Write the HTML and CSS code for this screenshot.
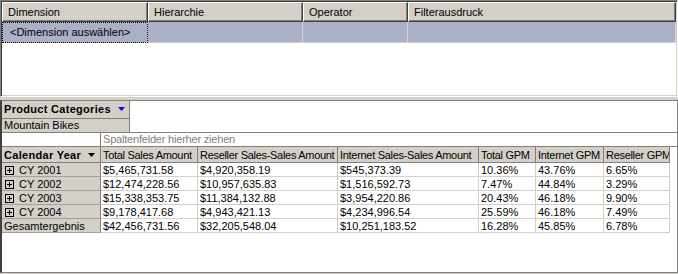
FILE: index.html
```html
<!DOCTYPE html>
<html lang="de">

<head>
    <meta charset="UTF-8">
    <title>Cube Browser</title>
    <link rel="stylesheet" href="styles.css">
</head>

<body>
    <!-- Filter grid -->
    <div class="filter-grid">
        <table class="grid">
            <tr>
                <th class="c-dim">Dimension</th>
                <th class="c-hier">Hierarchie</th>
                <th class="c-op">Operator</th>
                <th class="c-expr">Filterausdruck</th>
            </tr>
            <tr class="sel-row">
                <td class="focus">&lt;Dimension auswählen&gt;</td>
                <td></td>
                <td></td>
                <td></td>
            </tr>
        </table>
    </div>

    <!-- Pivot table -->
    <div class="pivot">
        <div class="filter-area">
            <div class="field">
                <div class="field-btn">Product Categories
                    <svg class="arrow" width="7" height="4" viewBox="0 0 7 4"><path d="M0 0H7L3.5 4Z" fill="#0000ff"/></svg>
                </div>
                <div class="field-value">Mountain Bikes</div>
            </div>
        </div>
        <div class="column-drop">
            <div class="drop-spacer"></div>
            <div class="drop-hint">Spaltenfelder hierher ziehen</div>
        </div>
        <table class="pv">
            <tr>
                <th class="w1 row-field">Calendar Year
                    <svg class="arrow" width="7" height="4" viewBox="0 0 7 4"><path d="M0 0H7L3.5 4Z" fill="#000"/></svg>
                </th>
                <th class="w2">Total Sales Amount</th>
                <th class="w3">Reseller Sales-Sales Amount</th>
                <th class="w4">Internet Sales-Sales Amount</th>
                <th class="w5">Total GPM</th>
                <th class="w6">Internet GPM</th>
                <th class="w7">Reseller GPM</th>
            </tr>
            <tr>
                <th class="rh"><span class="plus"></span>CY 2001</th>
                <td>$5,465,731.58</td><td>$4,920,358.19</td><td>$545,373.39</td><td>10.36%</td><td>43.76%</td><td>6.65%</td>
            </tr>
            <tr>
                <th class="rh"><span class="plus"></span>CY 2002</th>
                <td>$12,474,228.56</td><td>$10,957,635.83</td><td>$1,516,592.73</td><td>7.47%</td><td>44.84%</td><td>3.29%</td>
            </tr>
            <tr>
                <th class="rh"><span class="plus"></span>CY 2003</th>
                <td>$15,338,353.75</td><td>$11,384,132.88</td><td>$3,954,220.86</td><td>20.43%</td><td>46.18%</td><td>9.90%</td>
            </tr>
            <tr>
                <th class="rh"><span class="plus"></span>CY 2004</th>
                <td>$9,178,417.68</td><td>$4,943,421.13</td><td>$4,234,996.54</td><td>25.59%</td><td>46.18%</td><td>7.49%</td>
            </tr>
            <tr>
                <th class="rh">Gesamtergebnis</th>
                <td>$42,456,731.56</td><td>$32,205,548.04</td><td>$10,251,183.52</td><td>16.28%</td><td>45.85%</td><td>6.78%</td>
            </tr>
        </table>
    </div>
</body>

</html>
```

FILE: styles.css
```css
body {
    margin: 0;
    width: 678px;
    height: 274px;
    overflow: hidden;
    background-color: #d4d0c8;
    font-family: "Liberation Sans", Arial, sans-serif;
    font-size: 11px;
    color: #000;
}

/* Filter grid at the top */
.filter-grid {
    height: 97px;
    box-sizing: border-box;
    border-top: 1px solid #808080;
    border-left: 1px solid #808080;
    border-right: 1px solid #fff;
    border-bottom: 1px solid #fff;
    box-shadow: inset 1px 1px 0 #404040, inset -1px -1px 0 #d4d0c8;
    background-color: #fff;
    padding: 1px;
    margin-bottom: 3px;
}

.grid {
    table-layout: fixed;
    width: 674px;
    border-spacing: 0;
}

.grid th {
    box-sizing: border-box;
    height: 20px;
    padding: 0 5px;
    text-align: left;
    font-weight: normal;
    background-color: #d4d0c8;
    border-top: 1px solid #fff;
    border-left: 1px solid #fff;
    border-right: 1px solid #404040;
    border-bottom: 1px solid #404040;
    box-shadow: inset -1px -1px 0 #808080;
    white-space: nowrap;
}

.c-dim { width: 146px; }
.c-hier { width: 155px; }
.c-op { width: 105px; }
.c-expr { width: 268px; }

.sel-row td {
    box-sizing: border-box;
    height: 21px;
    padding: 0 8px;
    background-color: #a9b1c9;
    border-right: 1px solid #d4d0c8;
    border-bottom: 1px solid #d4d0c8;
    white-space: nowrap;
}

.sel-row td.focus {
    outline: 1px dotted #000;
    outline-offset: -1px;
}

/* Pivot area */
.pivot {
    height: 173px;
    box-sizing: border-box;
    border: 1px solid #808080;
    border-left: 2px solid #404040;
    background-color: #fff;
}

.filter-area {
    height: 32px;
    box-sizing: border-box;
    border-bottom: 1px solid #808080;
}

.field {
    width: 128px;
    box-sizing: border-box;
    border-right: 1px solid #808080;
    background-color: #d4d0c8;
}

.field-btn {
    height: 18px;
    box-sizing: border-box;
    border-bottom: 1px solid #808080;
    padding-left: 2px;
    line-height: 17px;
    font-weight: bold;
    letter-spacing: 0.3px;
    white-space: nowrap;
}

.field-value {
    height: 13px;
    padding-left: 2px;
    line-height: 13px;
}

.arrow {
    margin-left: 4px;
    vertical-align: 2px;
}

.column-drop {
    display: flex;
    height: 14px;
    box-sizing: border-box;
    border-bottom: 1px solid #808080;
}

.drop-spacer {
    width: 98px;
}

.drop-hint {
    border-left: 1px solid #808080;
    padding-left: 2px;
    line-height: 13px;
    color: #808080;
    letter-spacing: -0.2px;
}

.pv {
    table-layout: fixed;
    width: 668px;
    border-spacing: 0;
}

.pv th,
.pv td {
    box-sizing: border-box;
    padding: 0 2px;
    text-align: left;
    white-space: nowrap;
    overflow: hidden;
}

.pv tr:first-child th {
    height: 16px;
    font-weight: normal;
    letter-spacing: -0.3px;
    background-color: #d4d0c8;
    border-right: 1px solid #808080;
    border-bottom: 1px solid #808080;
}

.pv tr:first-child th.row-field {
    font-weight: bold;
    letter-spacing: 0.3px;
}

.w1 { width: 99px; }
.w2 { width: 97px; }
.w3 { width: 140px; }
.w4 { width: 141px; }
.w5 { width: 57px; }
.w6 { width: 68px; }
.w7 { width: 66px; }

.pv td {
    height: 14px;
    border-right: 1px solid #d4d0c8;
    border-bottom: 1px solid #d4d0c8;
}

.pv th.rh {
    height: 14px;
    font-weight: normal;
    background-color: #d4d0c8;
    border-right: 1px solid #808080;
    border-bottom: 1px solid #a0a0a0;
}

/* Expand box in row headers */
.plus {
    position: relative;
    display: inline-block;
    width: 9px;
    height: 9px;
    box-sizing: border-box;
    border: 1px solid #000;
    margin: 0 5px 0 1px;
    vertical-align: -1px;
}

.plus::before,
.plus::after {
    content: "";
    position: absolute;
    background-color: #000;
}

.plus::before {
    left: 1px;
    top: 3px;
    width: 5px;
    height: 1px;
}

.plus::after {
    left: 3px;
    top: 1px;
    width: 1px;
    height: 5px;
}
```
